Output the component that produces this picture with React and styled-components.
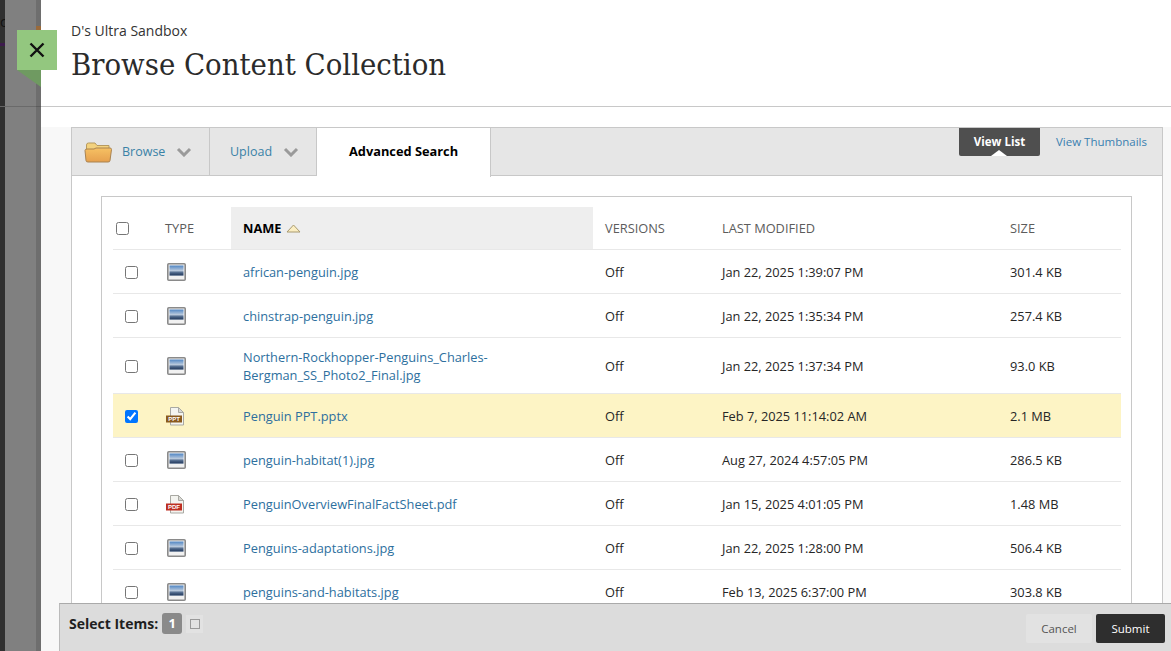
import React from 'react';
import styled, { createGlobalStyle } from 'styled-components';

const GlobalStyle = createGlobalStyle`
  html, body { margin: 0; padding: 0; height: 100%; }
  body { font-family: "Open Sans", "Liberation Sans", sans-serif; color: #262626; overflow: hidden; }
`;

const Page = styled.div`
  display: flex;
  height: 651px;
  overflow: hidden;
  position: relative;
`;
const Backdrop = styled.div`
  width: 41px;
  flex: none;
  display: flex;
`;
const EdgeStrip = styled.div`
  width: 5px;
  overflow: hidden;
  font-size: 14px;
  line-height: 20px;
  padding-top: 12px;
  color: #111;
  box-sizing: border-box;
  background:
    linear-gradient(#3d1a4d, #3d1a4d) 0 43px / 100% 3px no-repeat,
    linear-gradient(#666, #666) 0 106px / 100% 1px no-repeat,
    #303030;
`;
const MiddleStrip = styled.div`
  width: 31px;
  background: linear-gradient(#6a6a6a, #6a6a6a) 0 106px / 100% 1px no-repeat, #808080;
`;
const ShadeStrip = styled.div`
  width: 5px;
  background:
    linear-gradient(#9a6a3a, #9a6a3a) 0 26px / 100% 4px no-repeat,
    linear-gradient(#5c5c5c, #5c5c5c) 0 106px / 100% 1px no-repeat,
    #6e6e6e;
`;
const Panel = styled.main`
  flex: 1;
  min-width: 0;
  display: flex;
  flex-direction: column;
  background: #fff;
`;
const CloseTag = styled.button`
  position: absolute;
  left: 17px;
  top: 30px;
  width: 40px;
  height: 40px;
  padding: 0;
  border: none;
  background: #93c77f;
  display: flex;
  align-items: center;
  justify-content: center;
  &::after {
    content: '';
    position: absolute;
    left: 0;
    top: 40px;
    border-top: 17px solid #6f9a61;
    border-left: 24px solid transparent;
  }
`;
const Header = styled.header`
  height: 107px;
  flex: none;
  box-sizing: border-box;
  padding: 21px 0 0 30px;
  border-bottom: 1px solid #c8c8c8;
`;
const Crumb = styled.div`
  font-size: 14px;
  line-height: 20px;
  color: #333;
`;
const Title = styled.h1`
  margin: 3px 0 0;
  font-family: "DejaVu Serif Condensed", "DejaVu Serif", serif;
  font-stretch: condensed;
  font-weight: 400;
  font-size: 30.7px;
  line-height: 42px;
  color: #2b2b2b;
`;
const Gap = styled.div`
  height: 20px;
  flex: none;
`;
const Body = styled.div`
  flex: 1;
  min-height: 0;
  background: #f8f8f8;
  padding: 0 8px 0 30px;
`;
const Card = styled.section`
  background: #fff;
  border: 1px solid #c8c8c8;
  border-top: none;
  height: 100%;
  box-sizing: border-box;
`;
const TabBar = styled.div`
  height: 49px;
  box-sizing: border-box;
  background: #e6e6e6;
  border-top: 1px solid #c8c8c8;
  border-bottom: 1px solid #c8c8c8;
  display: flex;
  align-items: stretch;
`;
const Tab = styled.div`
  display: flex;
  align-items: center;
  box-sizing: border-box;
  width: ${({ $w }) => $w}px;
  padding-left: ${({ $pad }) => $pad}px;
  font-size: 12.5px;
  color: #3a82a6;
  border-right: 1px solid #c8c8c8;
`;
const ActiveTab = styled(Tab)`
  background: #fff;
  color: #000;
  font-size: 12.8px;
  font-weight: 700;
  height: 49px;
  padding-bottom: 4px;
`;
const TabLabel = styled.span`
  margin: 0 11px 0 ${({ $gap }) => $gap}px;
`;
const ViewSwitch = styled.div`
  margin-left: auto;
  display: flex;
  align-items: flex-start;
`;
const ViewCurrent = styled.div`
  position: relative;
  width: 81px;
  height: 28px;
  background: #4f4f4f;
  border-radius: 0 0 2px 2px;
  color: #fff;
  font-size: 11.5px;
  font-weight: 700;
  line-height: 27px;
  text-align: center;
  &::after {
    content: '';
    position: absolute;
    left: 32px;
    bottom: 0;
    border-left: 8px solid transparent;
    border-right: 8px solid transparent;
    border-bottom: 6px solid #fff;
  }
`;
const ViewLink = styled.a`
  width: 122px;
  box-sizing: border-box;
  padding-left: 16px;
  color: #3a7fb0;
  font-size: 11.5px;
  line-height: 27px;
`;
const TableBox = styled.div`
  margin: 20px 30px 0 29px;
  border: 1px solid #c8c8c8;
  border-bottom: none;
  padding: 10px 10px 0 11px;
  height: 100%;
  box-sizing: border-box;
`;
const columns = '40px 78px 362px 117px 288px 123px';
const HeadRow = styled.div`
  display: grid;
  grid-template-columns: ${columns};
  height: 42px;
  border-bottom: 1px solid #e8e8e8;
`;
const HeadCell = styled.div`
  display: flex;
  align-items: center;
  padding-left: ${({ $pad = 12 }) => $pad}px;
  font-size: 12.8px;
  color: #5c5c5c;
  text-transform: uppercase;
`;
const SortCell = styled(HeadCell)`
  background: #eeeeee;
  color: #000;
  font-weight: 700;
  gap: 5px;
`;
const Row = styled.div`
  display: grid;
  grid-template-columns: ${columns};
  height: ${({ $tall }) => ($tall ? 55 : 43)}px;
  border-bottom: 1px solid #e8e8e8;
  background: ${({ $selected }) => ($selected ? '#fdf4c5' : 'transparent')};
`;
const Cell = styled.div`
  display: flex;
  align-items: center;
  padding-left: ${({ $pad = 12 }) => $pad}px;
  font-size: 12.8px;
  line-height: 18px;
  color: #262626;
`;
const FileLink = styled.a`
  color: #2d6f9e;
`;
const Check = styled.input.attrs({ type: 'checkbox' })`
  margin: 0;
  width: 13px;
  height: 13px;
`;
const RowCheck = styled(Check)`
  margin-top: 2px;
`;
const Footer = styled.footer`
  position: absolute;
  left: 59px;
  right: 0;
  bottom: 0;
  height: 48px;
  box-sizing: border-box;
  background: #dcdcdc;
  border-top: 1px solid #aaa;
  border-left: 1px solid #bbb;
  display: flex;
  align-items: flex-start;
  padding: 9px 6px 0 9px;
`;
const SelectLabel = styled.span`
  font-size: 14px;
  font-weight: 700;
  line-height: 21px;
  color: #1f1f1f;
`;
const CountBadge = styled.span`
  width: 20px;
  height: 21px;
  margin-left: 4px;
  border-radius: 3px;
  background: #8a8a8a;
  color: #fff;
  font-size: 13px;
  font-weight: 700;
  text-align: center;
  line-height: 21px;
`;
const ListToggle = styled.span`
  width: 17px;
  height: 18px;
  margin: 2px 0 0 4px;
  background: #e2e2e2;
  display: flex;
  align-items: center;
  justify-content: center;
  &::before {
    content: '';
    width: 8px;
    height: 8px;
    border: 1px solid #999;
  }
`;
const Actions = styled.div`
  margin: 1px 0 0 auto;
  display: flex;
  gap: 4px;
`;
const Button = styled.button`
  height: 29px;
  width: ${({ $w }) => $w}px;
  border: none;
  padding: 0;
  border-radius: 2px;
  font-family: inherit;
  font-size: 11.5px;
  background: ${({ $primary }) => ($primary ? '#2e2e2e' : '#e2e2e2')};
  color: ${({ $primary }) => ($primary ? '#fff' : '#555')};
`;
const DocSvg = styled.svg`
  margin-left: -1px;
`;

const CloseIcon = () => (
  <svg width="16" height="16" viewBox="0 0 16 16">
    <path d="M1.5 1.5 L14.5 14.5 M14.5 1.5 L1.5 14.5" stroke="#111" strokeWidth="2.4" fill="none" />
  </svg>
);

const FolderIcon = () => (
  <svg width="28" height="22" viewBox="0 0 28 22">
    <defs>
      <linearGradient id="folderFront" x1="0" y1="0" x2="0" y2="1">
        <stop offset="0" stopColor="#f6c163" />
        <stop offset="1" stopColor="#e6a04e" />
      </linearGradient>
    </defs>
    <path d="M2.5 4 Q2.5 2 4.5 2 H11 L13 4.5 H25 V10 H2.5 Z" fill="#f3d27e" stroke="#b79a5f" />
    <path d="M1 9.5 Q1 8 3 8 H10 L12 7 H26 Q27.5 7 27.5 8.5 L26 19.5 Q26 21 24 21 H4 Q2 21 2 19.5 Z" fill="url(#folderFront)" stroke="#a98351" />
  </svg>
);

const Chevron = () => (
  <svg width="16" height="10" viewBox="0 0 16 10">
    <path d="M2 2 L8 8 L14 2" stroke="#9a9a9a" strokeWidth="3" fill="none" />
  </svg>
);

const SortArrow = () => (
  <svg width="15" height="9" viewBox="0 0 15 9">
    <path d="M7.5 1 L14 8 H1 Z" fill="#fbeec2" stroke="#a89a70" />
  </svg>
);

const ImageIcon = () => (
  <svg width="20" height="18" viewBox="0 0 20 18">
    <defs>
      <linearGradient id="photo" x1="0" y1="0" x2="0" y2="1">
        <stop offset="0" stopColor="#4f85c4" />
        <stop offset="0.5" stopColor="#bccbdd" />
        <stop offset="0.62" stopColor="#5f7899" />
        <stop offset="0.85" stopColor="#2c4468" />
        <stop offset="1" stopColor="#9aa8ba" />
      </linearGradient>
    </defs>
    <rect x="0.8" y="0.8" width="17.4" height="16.4" rx="1" fill="#f1f1f1" stroke="#8a8a8a" strokeWidth="1.6" />
    <rect x="2.5" y="2.5" width="14" height="10.5" fill="url(#photo)" />
  </svg>
);

const DocIcon = ({ label, color }) => (
  <DocSvg width="21" height="20" viewBox="0 0 21 20">
    <path d="M4.5 1.5 H12.5 L17.5 6.5 V19 H4.5 Z" fill="#f4f4f0" stroke="#a9a9a3" />
    <path d="M12.5 1.5 V6.5 H17.5 Z" fill="#d8d8d4" stroke="#a9a9a3" />
    <rect x="0" y="9.5" width="16" height="7" fill={color} />
    <text x="8" y="15.2" fontSize="6" fontWeight="700" fill="#fff" textAnchor="middle" fontFamily="Liberation Sans, sans-serif">{label}</text>
  </DocSvg>
);

const files = [
  { name: 'african-penguin.jpg', date: 'Jan 22, 2025 1:39:07 PM', size: '301.4 KB', icon: 'image' },
  { name: 'chinstrap-penguin.jpg', date: 'Jan 22, 2025 1:35:34 PM', size: '257.4 KB', icon: 'image' },
  { name: 'Northern-Rockhopper-Penguins_Charles-Bergman_SS_Photo2_Final.jpg', date: 'Jan 22, 2025 1:37:34 PM', size: '93.0 KB', icon: 'image', tall: true },
  { name: 'Penguin PPT.pptx', date: 'Feb 7, 2025 11:14:02 AM', size: '2.1 MB', icon: 'ppt', selected: true },
  { name: 'penguin-habitat(1).jpg', date: 'Aug 27, 2024 4:57:05 PM', size: '286.5 KB', icon: 'image' },
  { name: 'PenguinOverviewFinalFactSheet.pdf', date: 'Jan 15, 2025 4:01:05 PM', size: '1.48 MB', icon: 'pdf' },
  { name: 'Penguins-adaptations.jpg', date: 'Jan 22, 2025 1:28:00 PM', size: '506.4 KB', icon: 'image' },
  { name: 'penguins-and-habitats.jpg', date: 'Feb 13, 2025 6:37:00 PM', size: '303.8 KB', icon: 'image' },
];

const FileIcon = ({ type }) => {
  if (type === 'ppt') return <DocIcon label="PPT" color="#8a5a1e" />;
  if (type === 'pdf') return <DocIcon label="PDF" color="#bd2f22" />;
  return <ImageIcon />;
};

export default function App() {
  return (
    <Page>
      <GlobalStyle />
      <Backdrop>
        <EdgeStrip>c</EdgeStrip>
        <MiddleStrip />
        <ShadeStrip />
      </Backdrop>
      <CloseTag aria-label="Close"><CloseIcon /></CloseTag>
      <Panel>
        <Header>
          <Crumb>D's Ultra Sandbox</Crumb>
          <Title>Browse Content Collection</Title>
        </Header>
        <Gap />
        <Body>
          <Card>
            <TabBar>
              <Tab $w={138} $pad={12}>
                <FolderIcon />
                <TabLabel $gap={10}>Browse</TabLabel>
                <Chevron />
              </Tab>
              <Tab $w={107} $pad={20}>
                <TabLabel $gap={0}>Upload</TabLabel>
                <Chevron />
              </Tab>
              <ActiveTab $w={174} $pad={32}>Advanced Search</ActiveTab>
              <ViewSwitch>
                <ViewCurrent>View List</ViewCurrent>
                <ViewLink>View Thumbnails</ViewLink>
              </ViewSwitch>
            </TabBar>
            <TableBox>
              <HeadRow>
                <HeadCell $pad={3}><Check /></HeadCell>
                <HeadCell>Type</HeadCell>
                <SortCell>Name <SortArrow /></SortCell>
                <HeadCell>Versions</HeadCell>
                <HeadCell>Last Modified</HeadCell>
                <HeadCell>Size</HeadCell>
              </HeadRow>
              {files.map((f) => (
                <Row key={f.name} $tall={f.tall} $selected={f.selected}>
                  <Cell><RowCheck defaultChecked={f.selected} /></Cell>
                  <Cell $pad={14}><FileIcon type={f.icon} /></Cell>
                  <Cell><FileLink>{f.name}</FileLink></Cell>
                  <Cell>Off</Cell>
                  <Cell>{f.date}</Cell>
                  <Cell>{f.size}</Cell>
                </Row>
              ))}
            </TableBox>
          </Card>
        </Body>
      </Panel>
      <Footer>
        <SelectLabel>Select Items:</SelectLabel>
        <CountBadge>1</CountBadge>
        <ListToggle />
        <Actions>
          <Button $w={66}>Cancel</Button>
          <Button $w={69} $primary>Submit</Button>
        </Actions>
      </Footer>
    </Page>
  );
}
